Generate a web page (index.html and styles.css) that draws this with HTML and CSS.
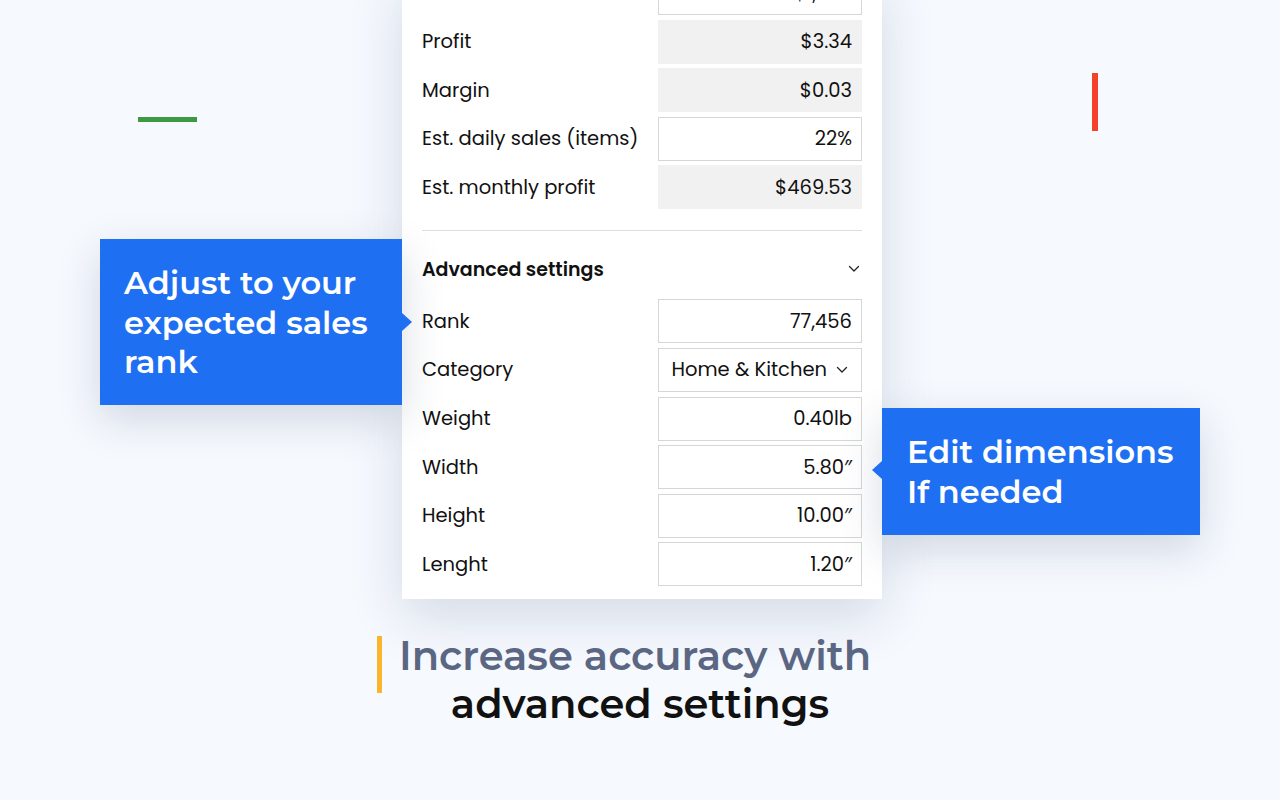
FILE: index.html
```html
<!DOCTYPE html>
<html lang="en">
<head>
<meta charset="utf-8">
<title>Advanced settings</title>
<link rel="stylesheet" href="styles.css">
</head>
<body>
<div class="stage">
  <span class="deco deco-green"></span>
  <span class="deco deco-red"></span>

  <section class="panel">
    <div class="row"><span class="label">Total cost</span><span class="field">$1,200</span></div>
    <div class="row"><span class="label">Profit</span><span class="field ro">$3.34</span></div>
    <div class="row"><span class="label">Margin</span><span class="field ro">$0.03</span></div>
    <div class="row"><span class="label">Est. daily sales (items)</span><span class="field">22%</span></div>
    <div class="row"><span class="label">Est. monthly profit</span><span class="field ro">$469.53</span></div>
    <hr class="divider">
    <div class="adv-head">
      <span class="adv-title">Advanced settings</span>
      <svg class="chev" width="12" height="8" viewBox="0 0 12 8"><path d="M1.5 1.5 L6 6 L10.5 1.5" fill="none" stroke="#222" stroke-width="1.3" stroke-linecap="round" stroke-linejoin="round"/></svg>
    </div>
    <div class="row"><span class="label">Rank</span><span class="field">77,456</span></div>
    <div class="row"><span class="label">Category</span><span class="field select">Home &amp; Kitchen<svg class="chev-sm" width="12" height="8" viewBox="0 0 12 8"><path d="M1.5 1.5 L6 6 L10.5 1.5" fill="none" stroke="#222" stroke-width="1.3" stroke-linecap="round" stroke-linejoin="round"/></svg></span></div>
    <div class="row"><span class="label">Weight</span><span class="field">0.40lb</span></div>
    <div class="row"><span class="label">Width</span><span class="field">5.80″</span></div>
    <div class="row"><span class="label">Height</span><span class="field">10.00″</span></div>
    <div class="row"><span class="label">Lenght</span><span class="field">1.20″</span></div>
  </section>

  <div class="callout callout-left">Adjust to your<br>expected sales<br>rank</div>
  <div class="callout callout-right">Edit dimensions<br>If needed</div>

  <h1 class="headline"><span class="muted">Increase accuracy with</span><br><span class="strong">advanced settings</span></h1>
</div>
</body>
</html>
```

FILE: styles.css
```css
* { box-sizing: border-box; }
html, body { margin: 0; padding: 0; }
body {
  background: #f6f9fe;
  font-family: "Montserrat", "Open Sans", sans-serif;
}
.stage {
  position: relative;
  width: 1280px;
  height: 800px;
  overflow: hidden;
  display: flex;
  flex-direction: column;
}
.deco { position: absolute; display: block; }
.deco-green { left: 138px; top: 117px; width: 59px; height: 5px; background: #3d9a41; }
.deco-red { left: 1092px; top: 73px; width: 6px; height: 58px; background: #f4412c; }

.panel {
  width: 480px;
  margin: -29px 0 0 402px;
  padding: 0 20px 13px;
  background: #fff;
  box-shadow: 0 18px 50px rgba(40, 60, 100, 0.16);
  display: flex;
  flex-direction: column;
  gap: 4.6px;
  font-family: "Poppins", "Noto Sans", "Open Sans", sans-serif;
  color: #111;
}
.row {
  display: flex;
  align-items: center;
  justify-content: space-between;
  height: 44px;
}
.label { font-size: 19.5px; }
.field {
  width: 204px;
  height: 44px;
  border: 1px solid #d6d6d6;
  display: flex;
  align-items: center;
  justify-content: flex-end;
  padding: 0 9px;
  font-size: 19.5px;
}
.field.ro { background: #f1f1f1; border-color: #f1f1f1; }
.field.select { gap: 9px; padding-right: 13px; }
.chev-sm { flex: none; margin-top: 1px; }
.divider {
  border: 0;
  border-top: 1px solid #dedede;
  margin: 16.4px 0 0;
}
.adv-head {
  height: 38px;
  margin: 14.4px 0 6.4px;
  display: flex;
  align-items: center;
  justify-content: space-between;
}
.adv-title { font-size: 19px; font-weight: 600; }
.chev { margin-right: 2px; }

.callout {
  position: absolute;
  background: #1e6ff1;
  color: #fff;
  font-family: "Montserrat", "Open Sans", sans-serif;
  font-weight: 600;
  font-size: 32px;
  line-height: 39.5px;
  box-shadow: 0 14px 40px rgba(40, 60, 100, 0.18);
}
.callout::after {
  content: "";
  position: absolute;
  width: 0; height: 0;
  border: 9px solid transparent;
  border-left-width: 10px;
  border-right-width: 10px;
}
.callout-left {
  left: 100px; top: 239px; width: 302px; height: 166px;
  padding: 24px 0 0 24px;
}
.callout-left::after {
  right: -20px; top: 74px;
  border-left-color: #1e6ff1;
}
.callout-right {
  left: 882px; top: 408px; width: 318px; height: 127px;
  padding: 24px 0 0 25px;
}
.callout-right::after {
  left: -20px; top: 53px;
  border-right-color: #1e6ff1;
}

.headline {
  position: relative;
  margin: 33px 0 0;
  align-self: center;
  text-align: center;
  font-family: "Montserrat", "Open Sans", sans-serif;
  font-weight: 600;
  font-size: 40px;
  line-height: 48px;
}
.headline::before {
  content: "";
  position: absolute;
  left: -22px; top: 4px;
  width: 5px; height: 57px;
  background: #fbb52b;
}
.headline .muted { color: #5b6782; margin-right: 10px; }
.headline .strong { color: #111; }
```
